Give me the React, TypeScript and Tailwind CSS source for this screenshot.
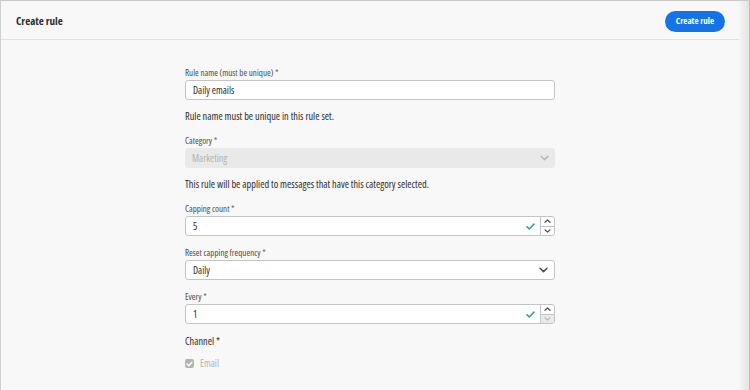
import React from "react";

function Label({ children }: { children: React.ReactNode }) {
  return (
    <div className="h-[15px] text-[9px] leading-[15px] text-[#4b4b4b]">
      {children} <span className="text-[#6e6e6e]">*</span>
    </div>
  );
}

function Check() {
  return (
    <svg width="9" height="7" viewBox="0 0 9 7" className="mr-[5px]">
      <path d="M1 3.8 L3.3 6 L8 1" fill="none" stroke="#2d9d78" strokeWidth="1.5" strokeLinecap="round" strokeLinejoin="round" />
    </svg>
  );
}

function Chevron({ up, color }: { up?: boolean; color: string }) {
  return (
    <svg width="7" height="4" viewBox="0 0 7 4">
      <path d={up ? "M1 3.3 L3.5 1 L6 3.3" : "M1 0.8 L3.5 3.1 L6 0.8"} fill="none" stroke={color} strokeWidth="1.2" strokeLinecap="round" strokeLinejoin="round" />
    </svg>
  );
}

function NumberField({ value, downDisabled }: { value: string; downDisabled?: boolean }) {
  return (
    <div className="flex h-[20px] overflow-hidden rounded-[3px] border border-[#c4c4c4] bg-white">
      <div className="flex flex-1 items-center pl-[7px] text-[10px] text-[#2c2c2c]">{value}</div>
      <div className="flex items-center">
        <Check />
      </div>
      <div className="flex w-[14px] flex-col border-l border-[#c4c4c4]">
        <div className="flex flex-1 items-center justify-center border-b border-[#c4c4c4]">
          <Chevron up color="#505050" />
        </div>
        <div className={downDisabled ? "flex flex-1 items-center justify-center bg-[#e9e9e9]" : "flex flex-1 items-center justify-center"}>
          <Chevron color={downDisabled ? "#b8b8b8" : "#505050"} />
        </div>
      </div>
    </div>
  );
}

function SelectChevron({ color }: { color: string }) {
  return (
    <svg width="9" height="6" viewBox="0 0 9 6">
      <path d="M1 1.2 L4.5 4.6 L8 1.2" fill="none" stroke={color} strokeWidth="1.5" strokeLinecap="round" strokeLinejoin="round" />
    </svg>
  );
}

export default function App() {
  return (
    <div className="relative flex h-[390px] w-[750px] overflow-hidden border-t border-[#c9c9c9] bg-[#f8f8f8] font-['Open_Sans',sans-serif] font-stretch-condensed">
      <div className="flex w-[739px] flex-col border-l border-[#d0d0d0]">
        <div className="flex h-[39px] items-center justify-between border-b border-[#e1e1e1] pl-[15px] pr-[14px] pt-[2px]">
          <div className="text-[11px] font-bold text-[#2c2c2c]">Create rule</div>
          <button className="h-[21px] w-[60px] rounded-full bg-[#1473e6] text-[9px] font-bold text-white">
            Create rule
          </button>
        </div>
        <div className="mx-auto mt-[25px] w-[370px]">
          <Label>Rule name (must be unique)</Label>
          <div className="flex h-[20px] items-center rounded-[3px] border border-[#c4c4c4] bg-white pl-[7px] text-[10px] text-[#2c2c2c]">
            Daily emails
          </div>
          <div className="mt-[8px] h-[16px] text-[10.3px] leading-[16px] text-[#2c2c2c]">
            Rule name must be unique in this rule set.
          </div>

          <div className="mt-[9px]">
            <Label>Category</Label>
          </div>
          <div className="flex h-[20px] items-center justify-between rounded-[3px] bg-[#e9e9e9] pl-[7px] pr-[6px] text-[10px] text-[#b3b3b3]">
            <span>Marketing</span>
            <SelectChevron color="#b8b8b8" />
          </div>
          <div className="mt-[8px] h-[16px] text-[10.3px] leading-[16px] text-[#2c2c2c]">
            This rule will be applied to messages that have this category selected.
          </div>

          <div className="mt-[9px]">
            <Label>Capping count</Label>
          </div>
          <NumberField value="5" />

          <div className="mt-[9px]">
            <Label>Reset capping frequency</Label>
          </div>
          <div className="flex h-[20px] items-center justify-between rounded-[3px] border border-[#c4c4c4] bg-white pl-[7px] pr-[6px] text-[10px] text-[#2c2c2c]">
            <span>Daily</span>
            <SelectChevron color="#4b4b4b" />
          </div>

          <div className="mt-[9px]">
            <Label>Every</Label>
          </div>
          <NumberField value="1" downDisabled />

          <div className="mt-[9px] h-[16px] text-[10.3px] leading-[16px] text-[#2c2c2c]">Channel *</div>
          <div className="mt-[7px] flex items-center">
            <div className="flex h-[9px] w-[9px] items-center justify-center rounded-[2px] bg-[#b3b3b3]">
              <svg width="7" height="6" viewBox="0 0 7 6">
                <path d="M1 3 L2.8 4.7 L6 1.2" fill="none" stroke="white" strokeWidth="1.3" strokeLinecap="round" strokeLinejoin="round" />
              </svg>
            </div>
            <span className="ml-[6px] text-[10px] text-[#b3b3b3]">Email</span>
          </div>
        </div>
      </div>
      <div className="h-full w-[11px] border-r border-[#bdbdbd] bg-gradient-to-r from-[#f6f6f6] to-[#e3e3e3]" />
    </div>
  );
}
